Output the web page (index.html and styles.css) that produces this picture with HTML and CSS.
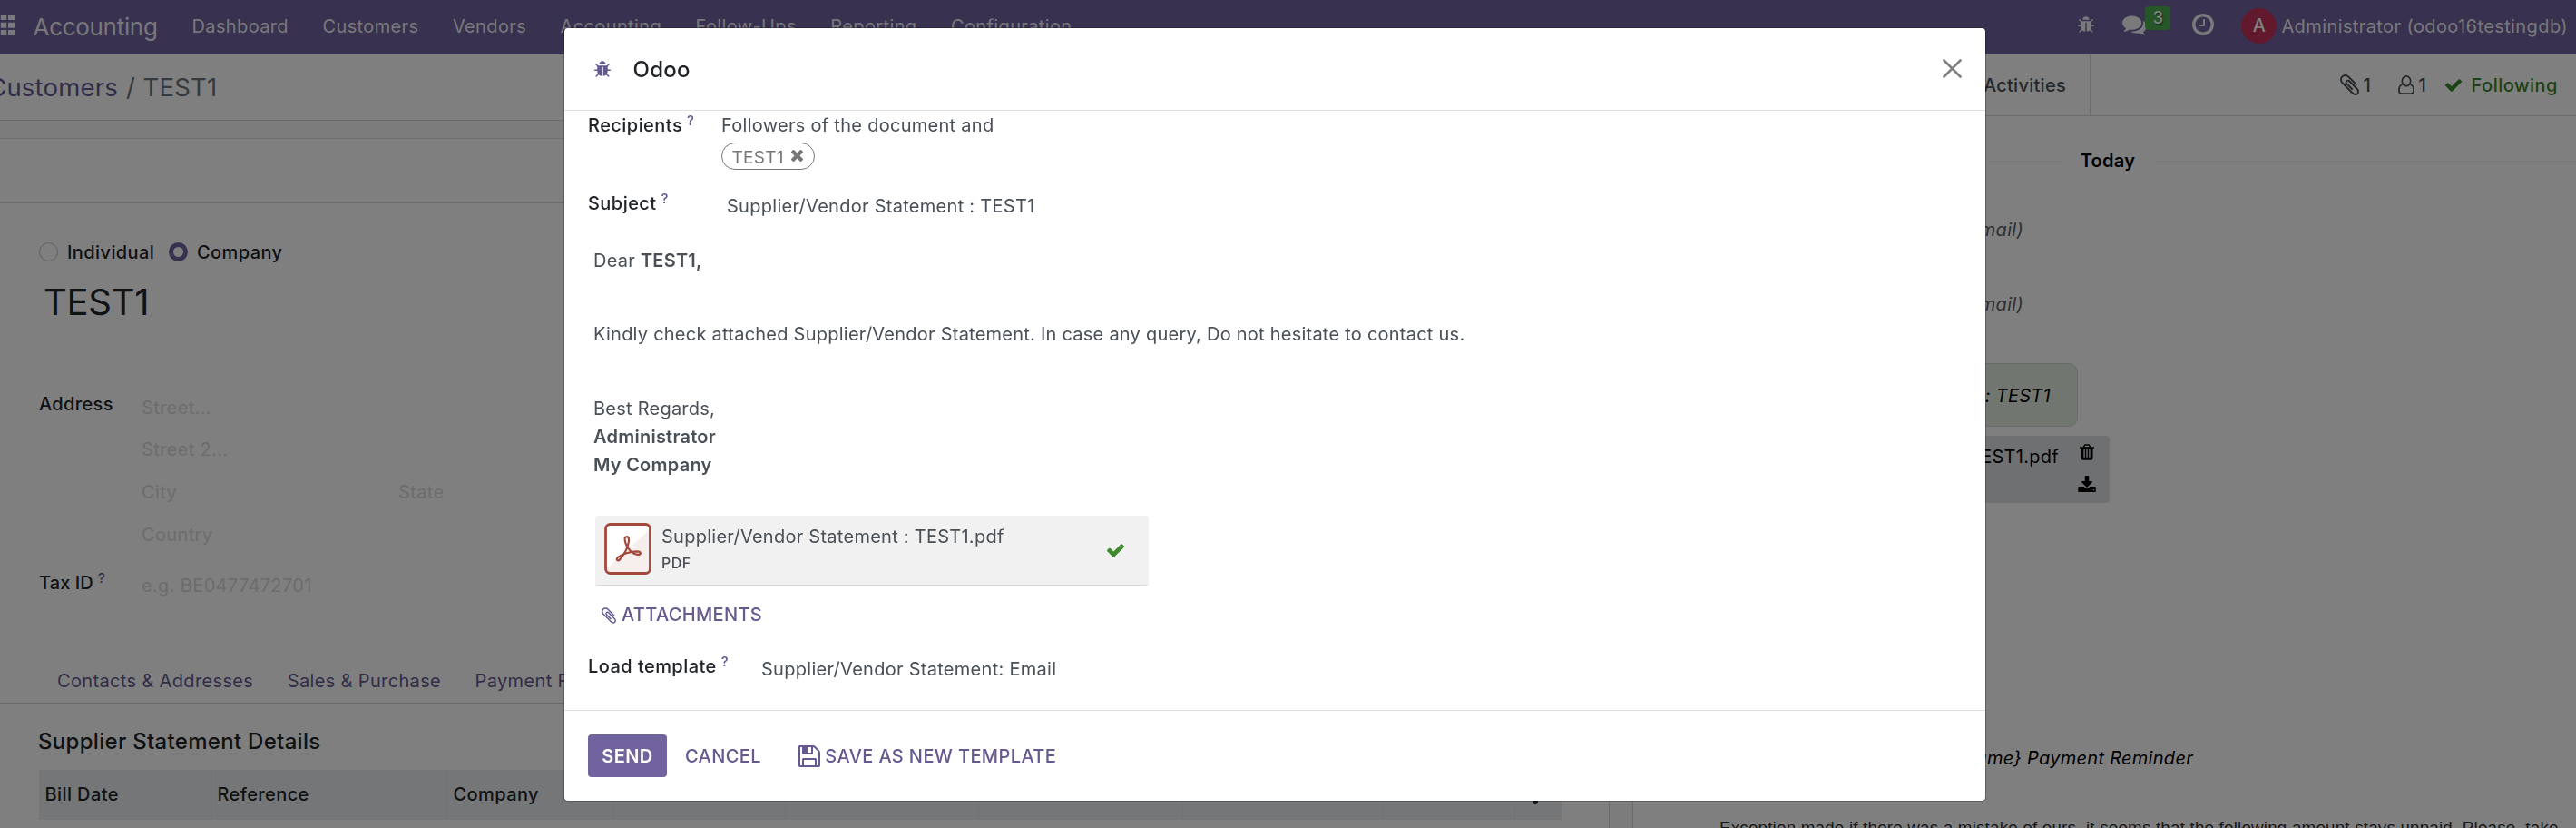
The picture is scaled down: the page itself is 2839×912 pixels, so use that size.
FILE: index.html
```
<!DOCTYPE html>
<html lang="en">
<head>
<meta charset="utf-8">
<title>Odoo - TEST1</title>
<link rel="stylesheet" href="styles.css">
</head>
<body>
<svg class="sprite" aria-hidden="true">
  <symbol id="bug" viewBox="96 64 1600 1568"><path d="M1696 960q0 26-19 45t-45 19h-224q0 171-67 290l208 209q19 19 19 45t-19 45q-18 19-45 19t-45-19l-198-197q-5 5-15 13t-42 28.5-65 36.5-82 29-97 13v-896h-128v896q-51 0-101.5-13.5t-87-33-66-39-43.5-32.5l-15-14-183 207q-20 21-48 21-24 0-43-16-19-18-20.5-44.5t15.5-46.5l202-227q-58-114-58-274h-224q-26 0-45-19t-19-45 19-45 45-19h224v-294l-173-173q-19-19-19-45t19-45 45-19 45 19l173 173h844l173-173q19-19 45-19t45 19 19 45-19 45l-173 173v294h224q26 0 45 19t19 45zm-480-576h-640q0-133 93.5-226.5t226.5-93.5 226.5 93.5 93.5 226.5z"/></symbol>
  <symbol id="comments" viewBox="0 256 1792 1408"><path d="M1408 768q0 139-94 257t-256.5 186.5-353.5 68.5q-86 0-176-16-124 88-278 128-36 9-86 16h-3q-11 0-20.5-8t-11.5-21q-1-3-1-6.5t.5-6.5 2-6l2.5-5 3.5-5.5 4-5 4.5-5 4-4.5q5-6 23-25t26-29.5 22.5-29 25-38.5 20.5-44q-124-72-195-177t-71-224q0-139 94-257t256.500-186.500 353.500-68.500 353.500 68.500 256.500 186.500 94 257zm384 256q0 120-71 224.500t-195 176.500q10 24 20.500 44t25 38.500 22.500 29 26 29.500 23 25q1 1 4 4.500t4.500 5 4 5 3.500 5.500l2.500 5 2 6 .5 6.500-1 6.500q-3 14-13 22t-22 7q-50-7-86-16-154-40-278-128-90 16-176 16-271 0-472-132 58 4 88 4 161 0 309-45t264-129q125-92 192-212t67-254q0-77-23-152 129 71 204 178t75 230z"/></symbol>
  <symbol id="clock" viewBox="128 128 1536 1536"><path d="M1024 544v448q0 14-9 23t-23 9h-320q-14 0-23-9t-9-23v-64q0-14 9-23t23-9h224v-352q0-14 9-23t23-9h64q14 0 23 9t9 23zm416 352q0-148-73-273t-198-198-273-73-273 73-198 198-73 273 73 273 198 198 273 73 273-73 198-198 73-273zm224 0q0 209-103 385.500t-279.500 279.500-385.500 103-385.500-103-279.500-279.500-103-385.500 103-385.500 279.500-279.500 385.500-103 385.500 103 279.500 279.500 103 385.500z"/></symbol>
  <symbol id="clip" viewBox="190 128 1412 1536"><path d="M1596 1385q0 117-79 196t-196 79q-135 0-235-100l-777-776q-113-115-113-271 0-159 110-270t269-111q158 0 273 113l605 606q10 10 10 22 0 16-30.500 46.500t-46.500 30.500q-13 0-23-10l-606-607q-79-77-181-77-106 0-179 75t-73 181q0 105 76 181l776 777q63 63 145 63 64 0 106-42t42-106q0-82-63-145l-581-581q-26-24-60-24-29 0-48 19t-19 48q0 32 25 59l410 410q10 10 10 22 0 16-31 47t-47 31q-12 0-22-10l-410-410q-63-61-63-149 0-82 57-139t139-57q88 0 149 63l581 581q100 98 100 235z"/></symbol>
  <symbol id="check" viewBox="121 334 1550 1188"><path d="M1671 566q0 40-28 68l-724 724-136 136q-28 28-68 28t-68-28l-136-136-362-362q-28-28-28-68t28-68l136-136q28-28 68-28t68 28l294 295 656-657q28-28 68-28t68 28l136 136q28 28 28 68z"/></symbol>
  <symbol id="times" viewBox="302 366 1188 1188"><path d="M1490 1322q0 40-28 68l-136 136q-28 28-68 28t-68-28l-294-294-294 294q-28 28-68 28t-68-28l-136-136q-28-28-28-68t28-68l294-294-294-294q-28-28-28-68t28-68l136-136q28-28 68-28t68 28l294 294 294-294q28-28 68-28t68 28l136 136q28 28 28 68t-28 68l-294 294 294 294q28 28 28 68z"/></symbol>
  <symbol id="trash" viewBox="192 128 1408 1536"><path d="M704 1376v-704q0-14-9-23t-23-9h-64q-14 0-23 9t-9 23v704q0 14 9 23t23 9h64q14 0 23-9t9-23zm256 0v-704q0-14-9-23t-23-9h-64q-14 0-23 9t-9 23v704q0 14 9 23t23 9h64q14 0 23-9t9-23zm256 0v-704q0-14-9-23t-23-9h-64q-14 0-23 9t-9 23v704q0 14 9 23t23 9h64q14 0 23-9t9-23zm-544-992h448l-48-117q-7-9-17-11h-317q-10 2-17 11zm928 32v64q0 14-9 23t-23 9h-96v948q0 83-47 143.500t-113 60.500h-832q-66 0-113-58.500t-47-141.500v-952h-96q-14 0-23-9t-9-23v-64q0-14 9-23t23-9h309l70-167q15-37 54-63t79-26h320q40 0 79 26t54 63l70 167h309q14 0 23 9t9 23z"/></symbol>
  <symbol id="download" viewBox="64 0 1664 1536"><path d="M1344 1344q0-26-19-45t-45-19-45 19-19 45 19 45 45 19 45-19 19-45zm256 0q0-26-19-45t-45-19-45 19-19 45 19 45 45 19 45-19 19-45zm128-224v320q0 40-28 68t-68 28h-1472q-40 0-68-28t-28-68v-320q0-40 28-68t68-28h465l135 136q58 56 136 56t136-56l136-136h464q40 0 68 28t28 68zm-325-569q17 41-14 70l-448 448q-18 19-45 19t-45-19l-448-448q-31-29-14-70 17-39 59-39h256v-448q0-26 19-45t45-19h256q26 0 45 19t19 45v448h256q42 0 59 39z"/></symbol>
  <symbol id="floppy" viewBox="128 128 1536 1536"><path d="M512 1536h768v-384h-768v384zm896 0h128v-896q0-14-10-38.500t-20-34.500l-281-281q-10-10-34-20t-39-10v416q0 40-28 68t-68 28h-576q-40 0-68-28t-28-68v-416h-128v1280h128v-416q0-40 28-68t68-28h832q40 0 68 28t28 68v416zm-384-928v-320q0-13-9.500-22.500t-22.500-9.500h-192q-13 0-22.500 9.500t-9.500 22.500v320q0 13 9.500 22.500t22.500 9.500h192q13 0 22.500-9.500t9.500-22.500zm640 32v928q0 40-28 68t-68 28h-1344q-40 0-68-28t-28-68v-1344q0-40 28-68t68-28h928q40 0 88 20t76 48l280 280q28 28 48 76t20 88z"/></symbol>
</svg>

<div class="app">
  <header class="navbar">
    <svg class="apps" viewBox="0 0 16 23"><path d="M-7 0h6v6h-6zM.8 0h6.500v6H.8zM9 0h7v6H9zM-7 8.700h6v6h-6zM.8 8.700h6.500v6H.8zM9 8.700h7v6H9zM-7 17h6v6h-6zM.8 17h6.500v6H.8zM9 17h7v6H9z"/></svg>
    <span class="brand">Accounting</span>
    <nav class="menu">
      <span>Dashboard</span><span>Customers</span><span>Vendors</span><span>Accounting</span><span>Follow-Ups</span><span>Reporting</span><span>Configuration</span>
    </nav>
    <div class="systray">
      <svg class="i-bug"><use href="#bug"/></svg>
      <span class="messages"><svg class="i-comments"><use href="#comments"/></svg><b class="badge">3</b></span>
      <svg class="i-clock"><use href="#clock"/></svg>
      <span class="avatar">A</span>
      <span class="user">Administrator (odoo16testingdb)</span>
    </div>
  </header>

  <div class="content">
    <main class="form">
      <div class="breadcrumb"><a>Customers</a><span class="slash">/</span><span>TEST1</span></div>
      <div class="strip"></div>
      <div class="buttonbox"></div>
      <section class="sheet">
        <div class="radios">
          <i class="radio"></i><span class="individual">Individual</span>
          <i class="radio on"></i><span>Company</span>
        </div>
        <h1 class="name">TEST1</h1>
        <div class="fields">
          <label>Address</label><span class="ph">Street...</span>
          <span></span><span class="ph">Street 2...</span>
          <span></span><div class="ph city"><span>City</span><span>State</span></div>
          <span></span><span class="ph">Country</span>
        </div>
        <div class="fields tax">
          <label>Tax ID<sup>?</sup></label><span class="ph">e.g. BE0477472701</span>
        </div>
      </section>
      <div class="tabs"><a>Contacts &amp; Addresses</a><a>Sales &amp; Purchase</a><a>Payment Follow-up</a></div>
      <h2 class="section">Supplier Statement Details</h2>
      <div class="thead">
        <span>Bill Date</span><span>Reference</span><span>Company</span><span></span><span></span><span></span><span></span><span></span>
        <span class="options"><svg viewBox="0 0 8 26"><path d="M4 5v.1M4 13v.1M4 21v.1" stroke="#212529" stroke-width="6" stroke-linecap="round"/></svg></span>
      </div>
    </main>
    <div class="gutter"></div>
    <aside class="chatter">
      <div class="topbar">
        <span class="activities">Activities</span>
        <div class="followbar">
          <svg class="i-clip"><use href="#clip"/></svg><span class="n1">1</span>
          <svg class="i-user" viewBox="0 0 18 21"><g fill="none" stroke="currentColor" stroke-width="1.700"><ellipse cx="9" cy="6.300" rx="4.700" ry="5.400"/><path d="M5 10C2 10.500.9 13 .9 16.500c0 2.500 1.200 3.600 3 3.600h10.200c1.800 0 3-1.100 3-3.600 0-3.500-1.100-6-4.100-6.500"/></g></svg><span class="n2">1</span>
          <svg class="i-check"><use href="#check"/></svg><span class="following">Following</span>
        </div>
      </div>
      <div class="today"><i></i><b>Today</b><i></i></div>
      <div class="note first">(Email)</div>
      <div class="note second">(Email)</div>
      <div class="bubble">Statement : TEST1</div>
      <div class="file">
        <span>TEST1.pdf</span>
        <div class="actions"><svg class="i-trash"><use href="#trash"/></svg><svg class="i-download"><use href="#download"/></svg></div>
      </div>
      <div class="reminder">{name} Payment Reminder</div>
      <p class="mailbody">Exception made if there was a mistake of ours, it seems that the following amount stays unpaid. Please, take</p>
    </aside>
  </div>
</div>

<div class="backdrop"></div>

<div class="modal">
  <div class="modal-head">
    <svg class="i-bug"><use href="#bug"/></svg>
    <span class="title">Odoo</span>
    <svg class="close" viewBox="0 0 21 21"><path d="M1.500 1.500l18 18M19.500 1.500l-18 18" stroke="currentColor" stroke-width="2.700" stroke-linecap="round"/></svg>
  </div>
  <div class="modal-body">
    <div class="row recipients">
      <label>Recipients<sup>?</sup></label>
      <div><div class="line">Followers of the document and</div><span class="tag">TEST1<svg><use href="#times"/></svg></span></div>
    </div>
    <div class="row subject">
      <label>Subject<sup>?</sup></label>
      <div class="line">Supplier/Vendor Statement : TEST1</div>
    </div>
    <div class="message">
      <p>Dear <b>TEST1,</b></p>
      <p class="kindly">Kindly check attached Supplier/Vendor Statement. In case any query, Do not hesitate to contact us.</p>
      <p>Best Regards,<br><b>Administrator<br>My Company</b></p>
    </div>
    <div class="attachment">
      <svg class="pdf" viewBox="0 0 52 57">
        <rect x="1.500" y="1.500" width="49" height="54" rx="5" fill="#fff"/>
        <path d="M50 7v43q0 5-5 5H7q-4 0-5-4z" fill="#f5eeec"/>
        <rect x="1.500" y="1.500" width="49" height="54" rx="5" fill="none" stroke="#a3493b" stroke-width="2.800"/>
        <path d="M23.300 15.700c3-1.500 4.300 1 3.600 5.200-1 6.500-5.300 14-9.600 19.200-2.600 2.600-5 .5-2.400-2.200 4.500-3.700 14-6.600 21-6.600 5.200.2 5 4 .8 3.600-5.500-.8-11.400-6.200-13.200-12.400-1-3.500-1.400-6-.2-6.800z" fill="none" stroke="#a3493b" stroke-width="2.200"/>
      </svg>
      <div class="meta"><div class="fname">Supplier/Vendor Statement : TEST1.pdf</div><div class="ext">PDF</div></div>
      <svg class="i-check"><use href="#check"/></svg>
    </div>
    <div class="attach-btn"><svg><use href="#clip"/></svg>ATTACHMENTS</div>
    <div class="row template">
      <label>Load template<sup>?</sup></label>
      <div class="line">Supplier/Vendor Statement: Email</div>
    </div>
  </div>
  <div class="modal-foot">
    <button class="send">SEND</button>
    <button class="cancel">CANCEL</button>
    <button class="save"><svg><use href="#floppy"/></svg>SAVE AS NEW TEMPLATE</button>
  </div>
</div>
</body>
</html>
```
FILE: styles.css
```
* { box-sizing: border-box; }
html, body { margin: 0; height: 912px; overflow: hidden; }
body {
  font: 400 20px/31px Inter, "Liberation Sans", sans-serif;
  letter-spacing: .28px;
  color: #495057;
  background: #fff;
  white-space: nowrap;
}
svg { display: block; flex: none; fill: currentColor; }
.sprite { position: absolute; width: 0; height: 0; }
p, h1, h2 { margin: 0; }
label { color: #212529; font-weight: 500; letter-spacing: .45px; }
label sup {
  display: inline-block;
  margin-left: 5px;
  font-size: 15px;
  line-height: 0;
  vertical-align: 7px;
  color: #66598f;
}

/* page */
.app { height: 912px; overflow: hidden; }
.navbar {
  display: flex;
  align-items: center;
  height: 60px;
  padding-bottom: 1px;
  border-bottom: 1px solid #5a4f7f;
  background: #71639e;
  color: rgba(255, 255, 255, .92);
}
.apps { width: 16px; height: 23px; margin-right: 20.500px; margin-top: -3px; }
.brand { width: 175px; font-size: 26px; letter-spacing: -.3px; }
.menu { display: flex; gap: 37.500px; letter-spacing: .37px; }
.systray { display: flex; align-items: center; margin-left: auto; padding-right: 9px; }
.i-bug { width: 18px; height: 18px; }
.systray .i-bug { margin: -4px -1px 0 0; }
.messages { position: relative; margin: -2px 0 0 32px; width: 77px; }
.i-comments { width: 27px; height: 22px; }
.badge {
  position: absolute;
  left: 25px;
  top: -10px;
  width: 28px;
  height: 26px;
  border-radius: 4px;
  background: #4fae50;
  color: #fff;
  font: 500 18px/25px Inter, sans-serif;
  text-align: center;
  text-shadow: 1px 1px 1px rgba(0, 0, 0, .5);
}
.i-clock { width: 24px; height: 24px; margin-top: -4px; }
.avatar {
  width: 39px;
  height: 39px;
  margin: -1px 5px 0 30px;
  border-radius: 50%;
  background: #c4325a;
  color: #fff;
  font-size: 20px;
  font-weight: 500;
  line-height: 39px;
  text-align: center;
}
.user { letter-spacing: .4px; }

.content { display: flex; height: 852px; }
.form { width: 1773px; flex: none; overflow: hidden; }
.gutter {
  width: 27px;
  flex: none;
  border: solid #d5d8de;
  border-width: 0 1px;
  background: #f8f8fb;
}
.breadcrumb {
  display: flex;
  align-items: center;
  height: 73px;
  padding-top: 1px;
  border-bottom: 1px solid #d4d4d6;
  font-size: 27.500px;
  letter-spacing: .2px;
  color: #6c757d;
}
.breadcrumb a { display: flex; justify-content: flex-end; width: 130px; color: #66598f; margin-right: 9px; }
.breadcrumb .slash { width: 18.500px; }
.strip { height: 20px; border-bottom: 1px solid #dcdde2; background: #f8f8fb; }
.buttonbox { height: 71px; border-bottom: 2px solid #dedfe4; }
.sheet { padding: 38px 0 0 43px; }
.radios { display: flex; align-items: center; height: 31px; color: #212529; font-weight: 500; letter-spacing: .4px; }
.radios span { padding-top: 1px; }
.radio { width: 21px; height: 21px; margin-right: 10px; border: 1px solid #b9bcc0; border-radius: 50%; }
.radio.on { border: 5.500px solid #71639e; }
.individual { width: 112px; }
.name { margin: 10px 0 0 5px; font-size: 40px; line-height: 60px; font-weight: 400; letter-spacing: -.3px; color: #212529; }
.fields {
  display: grid;
  grid-template-columns: 113px auto;
  grid-auto-rows: 46.600px;
  align-items: center;
  margin-top: 62.500px;
}
.fields label { padding-bottom: 6px; letter-spacing: .35px; }
.fields.tax { margin-top: 10px; }
.tax label { letter-spacing: .1px; }
.ph { padding-top: 1px; color: #d8dadd; letter-spacing: .35px; }
.city { display: grid; grid-template-columns: 283px auto; }
.tabs {
  display: flex;
  align-items: center;
  gap: 37.500px;
  height: 50px;
  margin-top: 56.500px;
  padding: 2px 0 0 63px;
  border-bottom: 1px solid #d2d3d5;
  color: #66598f;
  letter-spacing: .35px;
}
.section { margin: 22px 0 11px 42px; font-size: 24px; line-height: 40px; font-weight: 500; letter-spacing: .3px; color: #212529; }
.thead {
  display: grid;
  grid-template-columns: 190px 260px 183px 190px 213px 225px 220px 146px 51px;
  width: 1678px;
  height: 55px;
  margin-left: 43px;
  background: #ebedf0;
  color: #212529;
  font-weight: 500;
  line-height: 54px;
  letter-spacing: .4px;
}
.thead span { padding-left: 6.500px; border-right: 1px solid #e2e4e8; }
.thead .options { padding: 14px 0 0 18px; border: 0; }
.options svg { width: 8px; height: 26px; }

.chatter { flex: 1; overflow: hidden; }
.topbar { display: flex; height: 68px; border-bottom: 1px solid #d5d8de; line-height: 68px; color: #495057; }
.activities { width: 504px; padding-right: 26px; border-right: 1px solid #d5d8de; text-align: right; font-weight: 500; }
.followbar { display: flex; align-items: center; margin-left: auto; padding-right: 20px; font-weight: 500; }
.i-clip { width: 23px; height: 23px; margin-left: -1px; }
.n1 { width: 42px; padding-left: 3px; }
.i-user { width: 18px; height: 21px; }
.n2 { width: 34px; padding-left: 4px; }
.followbar .i-check { width: 18px; height: 14px; margin-right: 10px; color: #38862b; }
.following { color: #38862b; letter-spacing: .5px; }
.today { display: flex; align-items: center; height: 31px; margin-top: 34px; color: #000; }
.today i { flex: none; width: 472px; height: 1px; background: #f4f4f5; }
.today i:last-child { flex: 1; }
.today b { width: 102px; text-align: center; font-weight: 600; }
.note { width: 430px; font-style: italic; text-align: right; color: #5a5f64; }
.first { margin-top: 45px; }
.second { margin-top: 51px; }
.bubble {
  width: 490px;
  height: 70px;
  margin-top: 49px;
  padding-right: 29px;
  border: 1px solid #ccd8d0;
  border-radius: 10px;
  background: #e2eee0;
  color: #000;
  font-style: italic;
  line-height: 70px;
  text-align: right;
}
.file {
  display: flex;
  width: 525px;
  height: 74px;
  margin-top: 10px;
  padding-right: 15px;
  border-radius: 4px;
  background: #dee0e5;
  color: #000;
  justify-content: flex-end;
}
.file > span { padding-top: 8px; }
.actions { display: flex; flex-direction: column; align-items: center; gap: 17px; width: 20px; margin-left: 21px; padding-top: 9px; }
.i-trash { width: 16px; height: 18px; }
.i-download { width: 20px; height: 18px; }
.reminder { width: 617px; margin-top: 266px; text-align: right; font-style: italic; color: #000; }
.mailbody { margin: 49px 0 0 95px; font: 18.800px/24px "Liberation Sans", Arial, sans-serif; letter-spacing: .2px; color: #333; }

/* dialog */
.backdrop { position: fixed; inset: 0; background: rgba(0, 0, 0, .5); }
.modal {
  position: fixed;
  left: 622px;
  top: 31px;
  display: flex;
  flex-direction: column;
  width: 1566px;
  height: 851px;
  border-radius: 4px;
  background: #fff;
  box-shadow: 0 0 0 1px rgba(0, 0, 0, .25);
}
.modal-head {
  display: flex;
  align-items: center;
  height: 91px;
  padding: 0 26px 0 33px;
  border-bottom: 1px solid #dee0e2;
  color: #66598f;
}
.modal-head .i-bug { margin-top: -1px; }
.title { margin-left: 24.500px; font-size: 24px; font-weight: 500; color: #212529; }
.close { width: 21px; height: 21px; margin: -1px 0 0 auto; color: #808080; }
.modal-body { flex: 1; padding: 1px 26px 0; }
.row { display: grid; grid-template-columns: 147px auto; }
.tag {
  display: flex;
  align-items: center;
  gap: 8px;
  width: 103px;
  height: 30px;
  margin-top: 3px;
  padding: 2px 0 0 10.500px;
  border: 1.500px solid #777;
  border-radius: 15px;
  font-size: 19px;
  color: #777;
}
.tag svg { width: 13px; height: 13px; margin-top: -3px; }
.subject { grid-template-columns: 153px auto; margin-top: 25px; }
.subject label, .template label { margin-top: -3px; }
.message { padding-left: 6px; margin-top: 29px; letter-spacing: .24px; }
.message b { font-weight: 600; }
.kindly { margin: 50px 0 51px; }
.attachment {
  display: flex;
  width: 610px;
  height: 77px;
  margin: 40px 0 0 8px;
  padding: 8px 27px 0 10px;
  border-bottom: 1.500px solid #d9d9da;
  border-radius: 3px;
  background: #f1f1f1;
}
.pdf { width: 52px; height: 57px; }
.meta { margin-left: 11px; }
.fname { line-height: 31px; letter-spacing: .26px; }
.ext { padding-top: 1px; font-size: 16px; font-weight: 500; line-height: 24px; letter-spacing: .5px; }
.attachment .i-check { width: 19px; height: 15px; margin: 23px 0 0 auto; color: #3f8a2e; }
.attach-btn { display: flex; align-items: center; gap: 6px; margin: 17px 0 0 15px; color: #66598f; font-weight: 500; letter-spacing: .35px; }
.attach-btn svg { width: 16px; height: 18px; }
.template { grid-template-columns: 191px auto; margin-top: 29px; }
.modal-foot {
  display: flex;
  align-items: center;
  height: 100px;
  padding: 0 26px;
  border-top: 1px solid #dee0e2;
}
.modal-foot button {
  display: flex;
  align-items: center;
  height: 47px;
  padding: 1px 0 0;
  border: 0;
  background: none;
  color: #66598f;
  font: inherit;
  font-weight: 500;
  letter-spacing: .38px;
}
.modal-foot .send { width: 87px; justify-content: center; border-radius: 4px; background: #71639e; color: #fff; font-weight: 600; }
.modal-foot .cancel { margin: 0 41.500px 0 20px; }
.save svg { width: 24px; height: 24px; margin-right: 5px; }
```
